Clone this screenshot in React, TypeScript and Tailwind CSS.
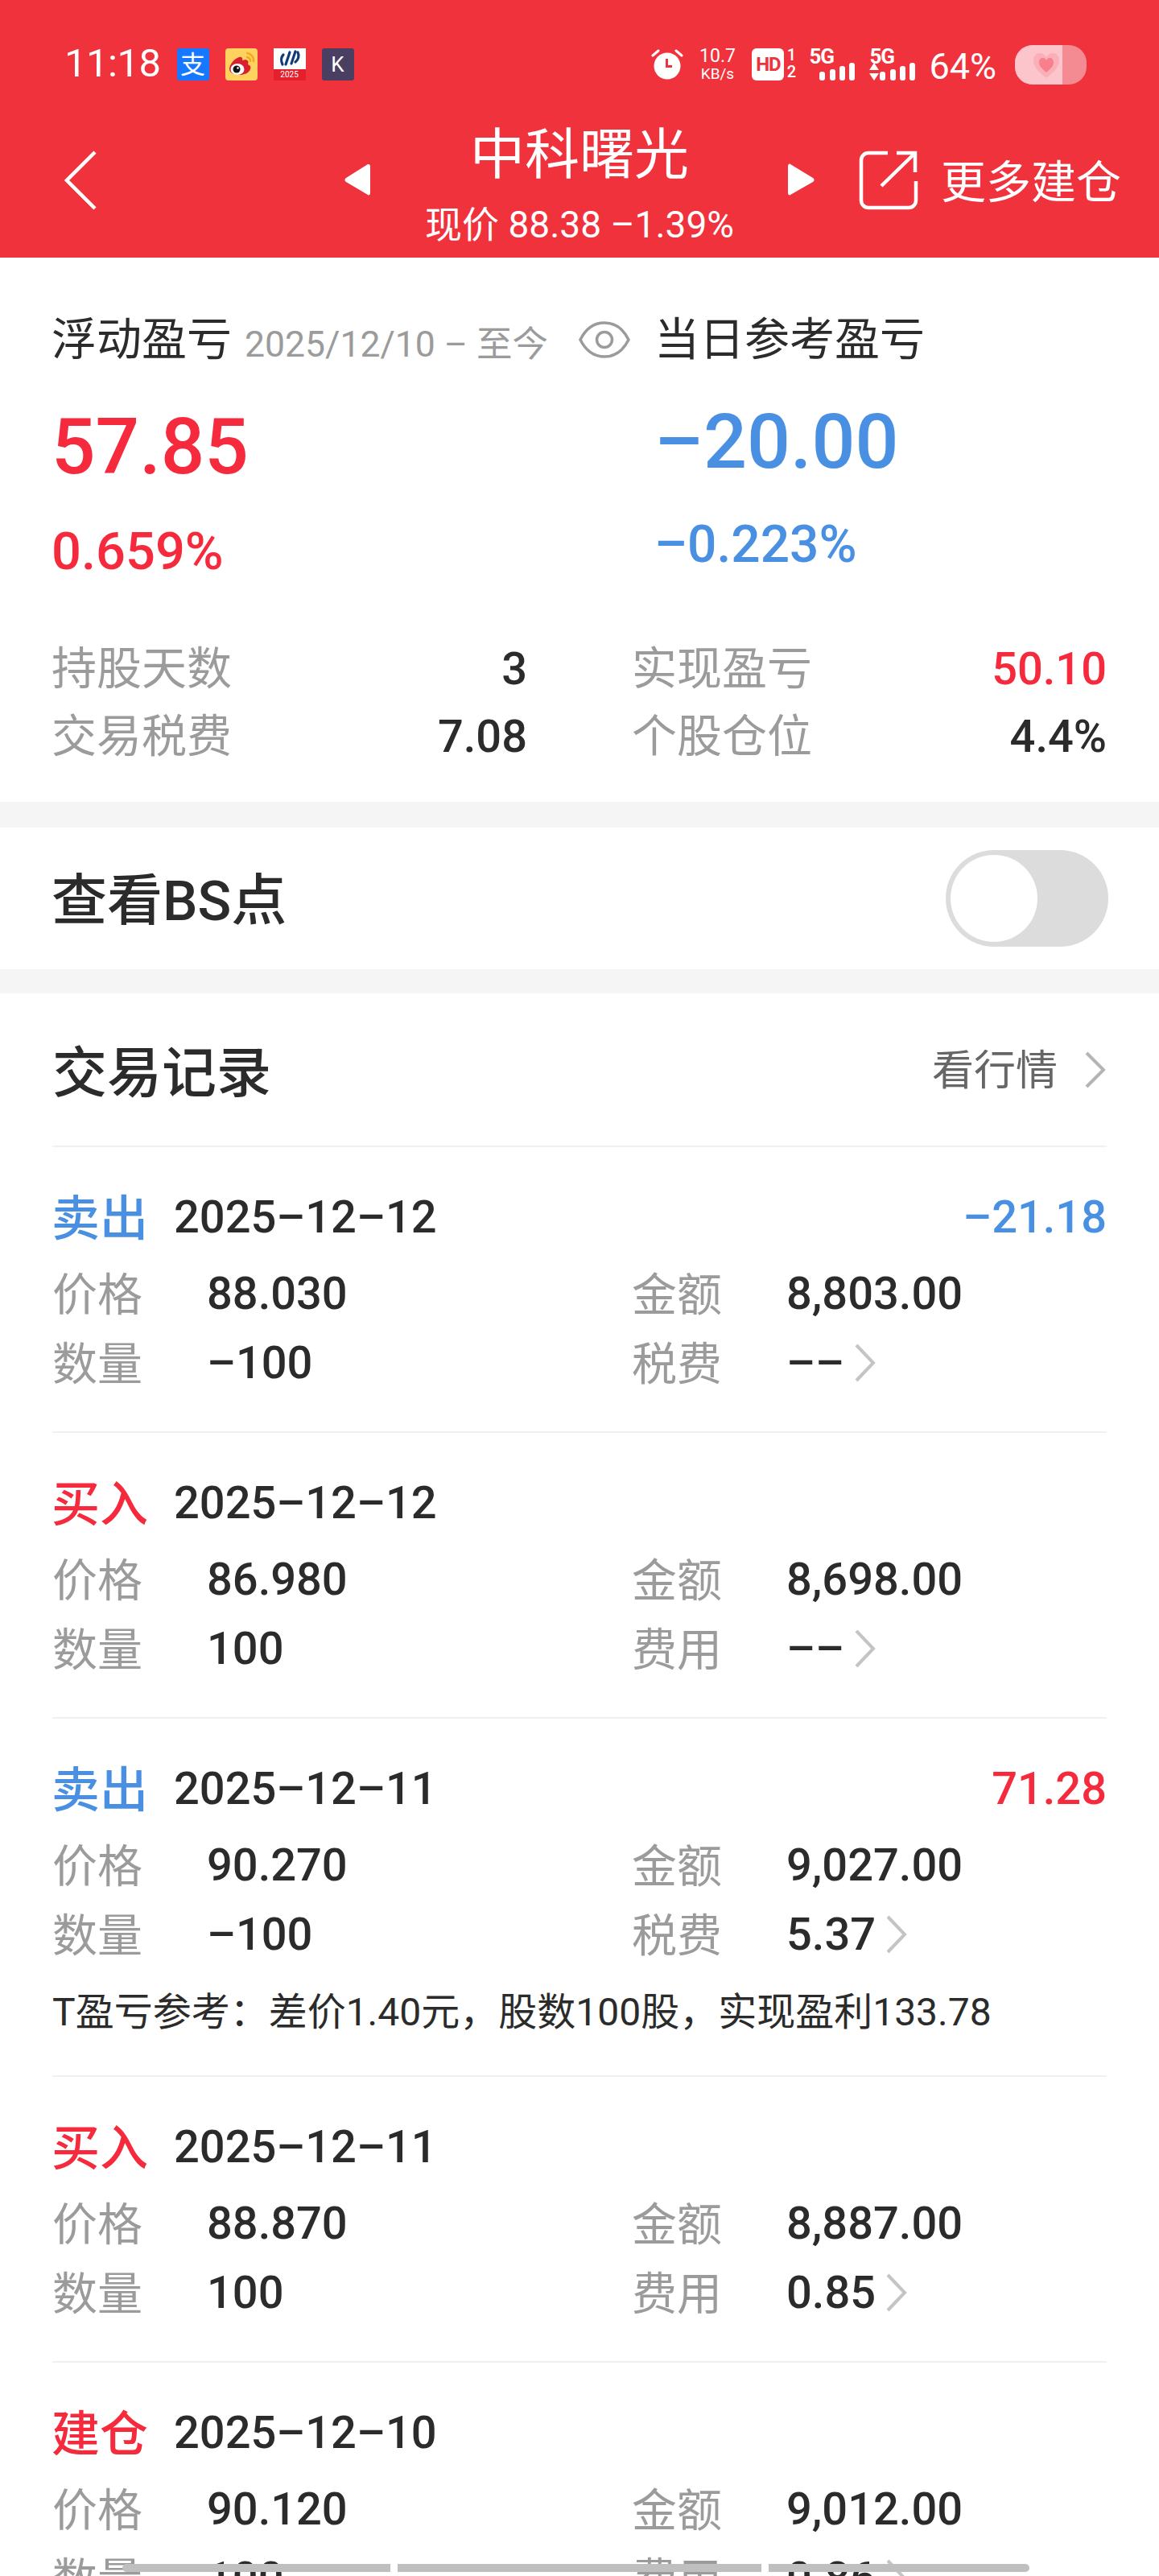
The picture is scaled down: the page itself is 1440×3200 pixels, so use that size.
const RED = 'text-[#f52a3c]';
const BLUE = 'text-[#4a90e2]';

type Trade = {
  action: string;
  tone: 'buy' | 'sell';
  date: string;
  profit?: string;
  profitTone?: 'buy' | 'sell';
  price: string;
  amount: string;
  qty: string;
  feeLabel: string;
  fee: string;
  note?: string;
};

const trades: Trade[] = [
  { action: '卖出', tone: 'sell', date: '2025–12–12', profit: '–21.18', profitTone: 'sell', price: '88.030', amount: '8,803.00', qty: '–100', feeLabel: '税费', fee: '––' },
  { action: '买入', tone: 'buy', date: '2025–12–12', price: '86.980', amount: '8,698.00', qty: '100', feeLabel: '费用', fee: '––' },
  { action: '卖出', tone: 'sell', date: '2025–12–11', profit: '71.28', profitTone: 'buy', price: '90.270', amount: '9,027.00', qty: '–100', feeLabel: '税费', fee: '5.37', note: 'T盈亏参考：差价1.40元，股数100股，实现盈利133.78' },
  { action: '买入', tone: 'buy', date: '2025–12–11', price: '88.870', amount: '8,887.00', qty: '100', feeLabel: '费用', fee: '0.85' },
  { action: '建仓', tone: 'buy', date: '2025–12–10', price: '90.120', amount: '9,012.00', qty: '100', feeLabel: '费用', fee: '0.86' },
];

const AppBadges = () => (
  <div className="flex items-center gap-[20px] ml-[20px] mt-[8px]">
    <div className="w-[40px] h-[40px] rounded-[3px] bg-[#1677ff] flex items-center justify-center text-white text-[31px] leading-none">支</div>
    <svg width="40" height="40" viewBox="0 0 40 40">
      <rect width="40" height="40" rx="4" fill="#fdd25f" />
      <path d="M5 26c0-6 6-13 12-15 3-1 5 1 4 4 5-2 9 0 7 5 3 1 4 3 3 6-2 5-8 7-13 7-8 0-13-3-13-7z" fill="#d9202f" />
      <ellipse cx="15" cy="26" rx="8.5" ry="7" fill="#fff" />
      <circle cx="14" cy="26" r="4.5" fill="#111" />
      <circle cx="15.5" cy="24.5" r="1.2" fill="#fff" />
      <path d="M27 6a9 9 0 0 1 8 10M27 11a4.5 4.5 0 0 1 4 5" fill="none" stroke="#f5a623" strokeWidth="2.4" strokeLinecap="round" />
    </svg>
    <div className="w-[40px] h-[40px] flex flex-col overflow-hidden bg-white">
      <svg width="40" height="26" viewBox="0 0 40 26">
        <path d="M12 8c-3 3-3 8-1 12M20 5l-5 15M27 4l-5 15M30 5c2 4 1 9-3 12" fill="none" stroke="#123a78" strokeWidth="3.2" strokeLinecap="round" />
      </svg>
      <div className="flex-1 bg-[#e3202c] text-white text-[10px] leading-[14px] text-center">2025</div>
    </div>
    <div className="w-[40px] h-[40px] rounded-[3px] bg-[#4a3f63] flex items-center justify-center text-white text-[26px] leading-none">K</div>
  </div>
);

const SignalBars = () => (
  <svg width="48" height="22" viewBox="0 0 48 22" className="absolute bottom-0 right-0" fill="#fff">
    <rect x="1" y="11" width="7" height="11" rx="3" />
    <rect x="14" y="8" width="7" height="14" rx="3" />
    <rect x="26" y="4" width="7" height="18" rx="3" />
    <rect x="38" y="0" width="7" height="22" rx="3" />
  </svg>
);

const StatusBar = () => (
  <div className="h-[120px] pl-[80px] pr-[90px] pt-[52px] flex items-start text-white">
    <div className="text-[49px] leading-[54px] tracking-[-0.5px]">11:18</div>
    <AppBadges />
    <div className="ml-auto flex items-start">
      <svg width="40" height="40" viewBox="0 0 40 40" className="mt-[8px]">
        <circle cx="20" cy="22" r="16.5" fill="#fff" />
        <path d="M18 13v11h8v-3h-5v-8z" fill="#f0323c" />
        <path d="M2 9l7-6M38 9l-7-6" stroke="#fff" strokeWidth="3" strokeLinecap="round" />
      </svg>
      <div className="ml-[17px] w-[50px] mt-[6px] text-[23px] leading-[23px] text-center">
        10.7
        <div className="text-[19px] leading-[21px]">KB/s</div>
      </div>
      <div className="ml-[18px] mt-[8px] w-[40px] h-[40px] rounded-[6px] bg-white text-[#f0323c] text-[24px] font-bold leading-[40px] text-center tracking-[-1px]">HD</div>
      <div className="ml-[2px] mt-[6px] w-[14px] text-[20px] leading-[21px] font-medium text-center">
        1<br />2
      </div>
      <div className="relative ml-[15px] mt-[8px] w-[60px] h-[40px]">
        <span className="absolute left-0 top-[-3px] text-[26px] leading-[26px] font-bold tracking-[-1px]">5G</span>
        <SignalBars />
      </div>
      <div className="relative ml-[15px] mt-[8px] w-[60px] h-[40px]">
        <span className="absolute left-0 top-[-3px] text-[26px] leading-[26px] font-bold tracking-[-1px]">5G</span>
        <svg width="12" height="22" viewBox="0 0 12 22" className="absolute left-0 bottom-0" fill="#fff">
          <path d="M6 0l6 9H0zM0 13h12l-6 9z" />
        </svg>
        <SignalBars />
      </div>
      <div className="ml-[14px] mt-[8px] text-[45px] leading-[46px] whitespace-nowrap">64%</div>
      <div className="relative ml-[23px] mt-[4px] w-[89px] h-[49px] rounded-[22px] overflow-hidden bg-[#f58b92] flex">
        <div className="w-[59px] h-full bg-[#fcc4cb] flex items-center justify-center">
          <svg width="36" height="34" viewBox="0 0 36 34" className="ml-[18px]">
            <path d="M18 33C8 25 2 19 2 11 2 5 6 2 10 2c4 0 6 2 8 5 2-3 4-5 8-5 4 0 8 3 8 9 0 8-6 14-16 22z" fill="#fbb0b9" />
            <path d="M18 26c-6-5-9-8-9-13 0-3 2-5 5-5 2 0 3 1 4 3 1-2 2-3 4-3 3 0 5 2 5 5 0 5-3 8-9 13z" fill="#f8808c" />
          </svg>
        </div>
      </div>
    </div>
  </div>
);

const NavBar = () => (
  <div className="relative h-[200px] pl-[80px] pr-[47px] flex items-start text-white">
    <svg width="40" height="74" viewBox="0 0 40 74" className="mt-[67px] shrink-0" fill="none" stroke="#fff" strokeWidth="4.5">
      <path d="M38 2L3 37l35 35" />
    </svg>
    <svg width="32" height="40" viewBox="0 0 32 40" className="ml-[308px] mt-[83px] shrink-0" fill="#fff">
      <path d="M30 1c1 0 2 1 2 2v34c0 2-2 3-3 2L2 23c-2-1-2-4 0-5L29 1z" />
    </svg>
    <div className="absolute left-[520px] w-[400px] top-[33px] flex flex-col items-center">
      <div className="text-[68px] leading-[80px]">中科曙光</div>
      <div className="mt-[19px] text-[46px] leading-[54px] whitespace-nowrap">现价 88.38 –1.39%</div>
    </div>
    <div className="ml-auto flex items-start">
      <svg width="33" height="40" viewBox="0 0 33 40" className="mt-[83px] shrink-0" fill="#fff">
        <path d="M0 3c0-2 2-3 3-2l28 17c2 1 2 4 0 5L3 39c-1 1-3 0-3-2z" />
      </svg>
      <svg width="74" height="74" viewBox="0 0 74 74" className="ml-[55px] mt-[67px] shrink-0" fill="none" stroke="#fff" strokeWidth="4.5">
        <path d="M36 3H12a9 9 0 0 0-9 9v50a9 9 0 0 0 9 9h50a9 9 0 0 0 9-9V38" />
        <path d="M28 44L70 3M47 3h23v24" />
      </svg>
      <div className="ml-[28px] mt-[74px] text-[56px] leading-[66px] whitespace-nowrap">更多建仓</div>
    </div>
  </div>
);

const Stat = ({ label, value, valueClass = 'text-[#2b2b2b]' }: { label: string; value: string; valueClass?: string }) => (
  <div className="flex items-center justify-between h-[84px]">
    <span className="text-[56px] text-[#9b9b9b]">{label}</span>
    <span className={`text-[56px] font-medium ${valueClass}`}>{value}</span>
  </div>
);

const Summary = () => (
  <section className="h-[676px] bg-white pl-[64px] pr-[65px] pt-[66px]">
    <div className="grid grid-cols-[749px_1fr]">
      <div>
        <div className="flex items-center h-[72px]">
          <span className="text-[56px] text-[#2b2b2b] whitespace-nowrap">浮动盈亏</span>
          <span className="ml-[16px] mt-[12px] text-[44.5px] text-[#9b9b9b] whitespace-nowrap">2025/12/10 – 至今</span>
          <svg width="64" height="48" viewBox="0 0 64 48" className="ml-[38px] shrink-0" fill="none" stroke="#9b9b9b" strokeWidth="3.5">
            <path d="M2 24C9 10 20 3 32 3s23 7 30 21c-7 14-18 21-30 21S9 38 2 24z" />
            <circle cx="32" cy="24" r="9.5" />
          </svg>
        </div>
        <div className={`mt-[39px] text-[96px] leading-[116px] font-medium ${RED}`}>57.85</div>
        <div className={`mt-[32px] text-[65px] leading-[80px] font-medium ${RED}`}>0.659%</div>
      </div>
      <div>
        <div className="text-[56px] leading-[72px] text-[#2b2b2b] whitespace-nowrap">当日参考盈亏</div>
        <div className={`mt-[33px] text-[95px] leading-[116px] font-medium ${BLUE}`}>–20.00</div>
        <div className={`mt-[30px] text-[64px] leading-[80px] font-medium ${BLUE}`}>–0.223%</div>
      </div>
    </div>
    <div className="mt-[64px] grid grid-cols-[591px_590px] gap-x-[130px]">
      <Stat label="持股天数" value="3" />
      <Stat label="实现盈亏" value="50.10" valueClass={RED} />
      <Stat label="交易税费" value="7.08" />
      <Stat label="个股仓位" value="4.4%" />
    </div>
  </section>
);

const BsToggle = () => (
  <section className="h-[176px] bg-white px-[63px] flex items-center justify-between">
    <span className="text-[69px] font-medium text-[#2b2b2b] ml-[1px] pt-[8px]">查看BS点</span>
    <div className="w-[202px] h-[120px] rounded-full bg-[#dcdcdc] p-[6px]">
      <div className="w-[108px] h-[108px] rounded-full bg-white" />
    </div>
  </section>
);

const SmallChevron = () => (
  <svg width="28" height="50" viewBox="0 0 28 50" className="ml-[12px] shrink-0" fill="none" stroke="#c4c4c4" strokeWidth="4">
    <path d="M3 3l21 22L3 47" />
  </svg>
);

const Field = ({ label, value, chevron }: { label: string; value: string; chevron?: boolean }) => (
  <div className="flex items-center h-[86px]">
    <span className="w-[192px] shrink-0 text-[56px] text-[#9b9b9b] pt-[3px]">{label}</span>
    <span className="text-[56px] font-medium text-[#2b2b2b]">{value}</span>
    {chevron && <SmallChevron />}
  </div>
);

const TradeRow = ({ trade }: { trade: Trade }) => (
  <div className={`border-t-[2px] border-[#f0f0f0] pt-[57px] ${trade.note ? 'pb-[48px]' : 'pb-[42px]'}`}>
    <div className="flex items-center h-[60px]">
      <span className={`text-[60px] font-medium pt-[6px] -ml-[1px] ${trade.tone === 'sell' ? BLUE : RED}`}>{trade.action}</span>
      <span className="ml-[32px] text-[56px] font-medium text-[#2b2b2b]">{trade.date}</span>
      {trade.profit && (
        <span className={`ml-auto text-[56px] font-medium ${trade.profitTone === 'sell' ? BLUE : RED}`}>{trade.profit}</span>
      )}
    </div>
    <div className="mt-[22px] grid grid-cols-[720px_1fr]">
      <Field label="价格" value={trade.price} />
      <Field label="金额" value={trade.amount} />
      <Field label="数量" value={trade.qty} />
      <Field label={trade.feeLabel} value={trade.fee} chevron />
    </div>
    {trade.note && <div className="mt-[24px] text-[48px] leading-[60px] text-[#2b2b2b] whitespace-nowrap">{trade.note}</div>}
  </div>
);

const TradeList = () => (
  <section className="bg-white px-[65px]">
    <div className="h-[189px] flex items-center justify-between">
      <span className="text-[68px] font-medium text-[#2b2b2b] pt-[10px]">交易记录</span>
      <div className="flex items-center">
        <span className="text-[52px] text-[#666666] pt-[4px]">看行情</span>
        <svg width="28" height="48" viewBox="0 0 28 48" className="ml-[33px]" fill="none" stroke="#b5b5b5" strokeWidth="4">
          <path d="M3 3l21 21L3 45" />
        </svg>
      </div>
    </div>
    {trades.map((trade) => (
      <TradeRow key={trade.date + trade.action} trade={trade} />
    ))}
  </section>
);

export default function App() {
  return (
    <div className="relative w-[1440px] h-[3200px] overflow-hidden bg-[#f5f5f5] font-['Roboto','Noto_Sans_CJK_SC',sans-serif]">
      <header className="h-[320px] bg-[#f0323c]">
        <StatusBar />
        <NavBar />
      </header>
      <Summary />
      <div className="h-[32px]" />
      <BsToggle />
      <div className="h-[30px]" />
      <TradeList />
      {/* gesture hint strip along the bottom edge */}
      <div className="absolute left-[152px] bottom-[5px] flex gap-[9px]">
        <div className="w-[333px] h-[10px] rounded-l-full bg-[#bfbfbf]" />
        <div className="w-[452px] h-[10px] bg-[#bfbfbf]" />
        <div className="w-[324px] h-[10px] rounded-r-full bg-[#bfbfbf]" />
      </div>
    </div>
  );
}
